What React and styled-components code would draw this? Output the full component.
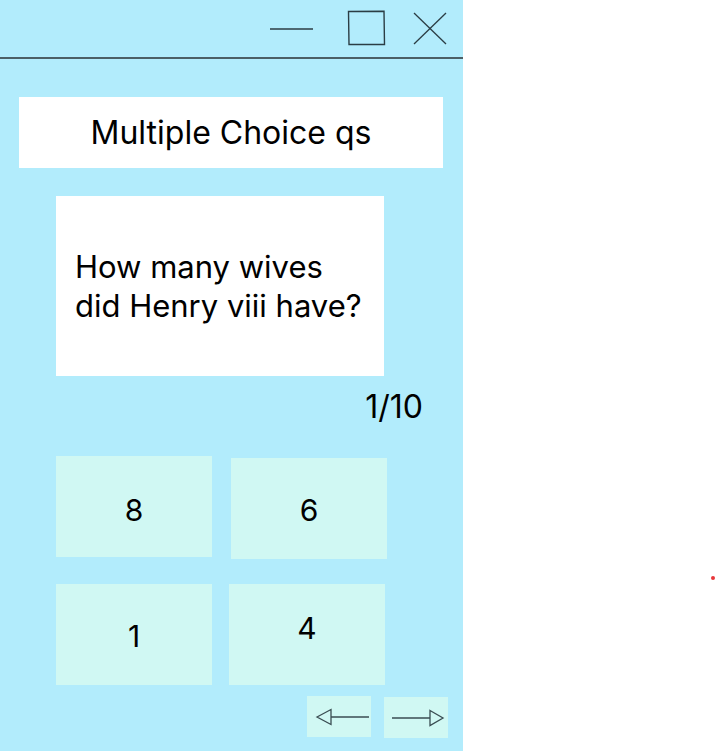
import styled, { createGlobalStyle } from "styled-components";

const GlobalStyle = createGlobalStyle`
    html, body {
        margin: 0;
        padding: 0;
        background: #ffffff;
    }
    body {
        font-family: Inter, "Noto Sans", sans-serif;
        color: #000000;
    }
`

const Page = styled.div`
    position: relative;
    width: 717px;
    height: 751px;
    overflow: hidden;
`

const Window = styled.div`
    width: 463px;
    height: 751px;
    background: #b2ecfc;
    display: flex;
    flex-direction: column;
`

const TitleBar = styled.div`
    height: 57px;
    display: flex;
    align-items: center;
    justify-content: flex-end;
    padding-right: 14px;
    border-bottom: 2px solid #4b5f66;
    box-sizing: content-box;
`

const Control = styled.svg`
    display: block;
    margin-left: ${({ $gap }) => $gap}px;
    stroke: #2b3d44;
    fill: none;
`

const Heading = styled.div`
    margin: 38px 0 0 19px;
    width: 424px;
    height: 71px;
    background: #ffffff;
    display: flex;
    align-items: center;
    justify-content: center;
    font-size: 32px;
`

const QuestionCard = styled.div`
    margin: 28px 0 0 56px;
    width: 328px;
    height: 180px;
    box-sizing: border-box;
    padding-left: 19px;
    background: #ffffff;
    display: flex;
    align-items: center;
    font-size: 31px;
    line-height: 39px;
`

const Counter = styled.div`
    margin-top: 14px;
    padding-right: 40px;
    text-align: right;
    font-size: 32px;
    line-height: 34px;
`

const Answers = styled.div`
    margin: 32px 0 0 56px;
    display: grid;
    grid-template-columns: 156px 156px;
    grid-template-rows: 101px 101px;
    align-items: start;
    column-gap: 18px;
    row-gap: 27px;
`

const Answer = styled.div`
    width: 156px;
    height: 101px;
    background: #d0f8f3;
    display: flex;
    align-items: center;
    justify-content: center;
    font-size: 30px;
    margin-top: ${({ $dy }) => $dy || 0}px;
    margin-left: ${({ $dx }) => $dx || 0}px;
    padding-bottom: ${({ $lift }) => Math.max($lift || 0, 0)}px;
    padding-top: ${({ $lift }) => Math.max(-($lift || 0), 0)}px;
    box-sizing: border-box;
`

const Nav = styled.div`
    margin-top: 11px;
    padding-right: 15px;
    display: flex;
    justify-content: flex-end;
    gap: 13px;
`

const NavButton = styled.div`
    width: 64px;
    height: 41px;
    background: #d0f8f3;
    display: flex;
    align-items: center;
    justify-content: center;
    margin-top: ${({ $dy }) => $dy || 0}px;
`

const Dot = styled.div`
    position: absolute;
    left: 711px;
    top: 576px;
    width: 4px;
    height: 4px;
    border-radius: 50%;
    background: #e8373a;
`

function App() {
    const answers = [
        { label: "8", lift: -6 },
        { label: "6", dy: 2, dx: 1, lift: -2 },
        { label: "1", lift: -2 },
        { label: "4", dx: -1, lift: 13 },
    ];

    return (
        <Page>
            <GlobalStyle />
            <Window>
                <TitleBar>
                    <Control $gap={0} width="47" height="34" viewBox="0 0 47 34">
                        <line x1="2" y1="17" x2="45" y2="17" strokeWidth="1.4" />
                    </Control>
                    <Control $gap={31} width="41" height="37" viewBox="0 0 41 37">
                        <path d="M2.5 1.5 L38 1.3 L38.5 34.5 L3 34.5 Z" strokeWidth="1.4" />
                    </Control>
                    <Control $gap={24} width="38" height="35" viewBox="0 0 38 35">
                        <line x1="3" y1="2" x2="35" y2="33" strokeWidth="1.3" />
                        <line x1="35" y1="2" x2="3" y2="33" strokeWidth="1.3" />
                    </Control>
                </TitleBar>

                <Heading>Multiple Choice qs</Heading>

                <QuestionCard>
                    How many wives<br />did Henry viii have?
                </QuestionCard>

                <Counter>1/10</Counter>

                <Answers>
                    {answers.map((a) => (
                        <Answer key={a.label} $dx={a.dx} $dy={a.dy} $lift={a.lift}>
                            {a.label}
                        </Answer>
                    ))}
                </Answers>

                <Nav>
                    <NavButton>
                        <svg width="62" height="20" viewBox="0 0 62 20" fill="none" stroke="#3a4d52" strokeWidth="1.3">
                            <path d="M9 10 L23 2.5 L23 17.5 Z" />
                            <line x1="23" y1="10" x2="61" y2="10" />
                        </svg>
                    </NavButton>
                    <NavButton $dy={1}>
                        <svg width="62" height="20" viewBox="0 0 62 20" fill="none" stroke="#3a4d52" strokeWidth="1.3">
                            <line x1="7" y1="10" x2="45" y2="10" />
                            <path d="M45 2.5 L58 10 L45 17.5 Z" />
                        </svg>
                    </NavButton>
                </Nav>
            </Window>
            <Dot />
        </Page>
    );
}

export default App;
